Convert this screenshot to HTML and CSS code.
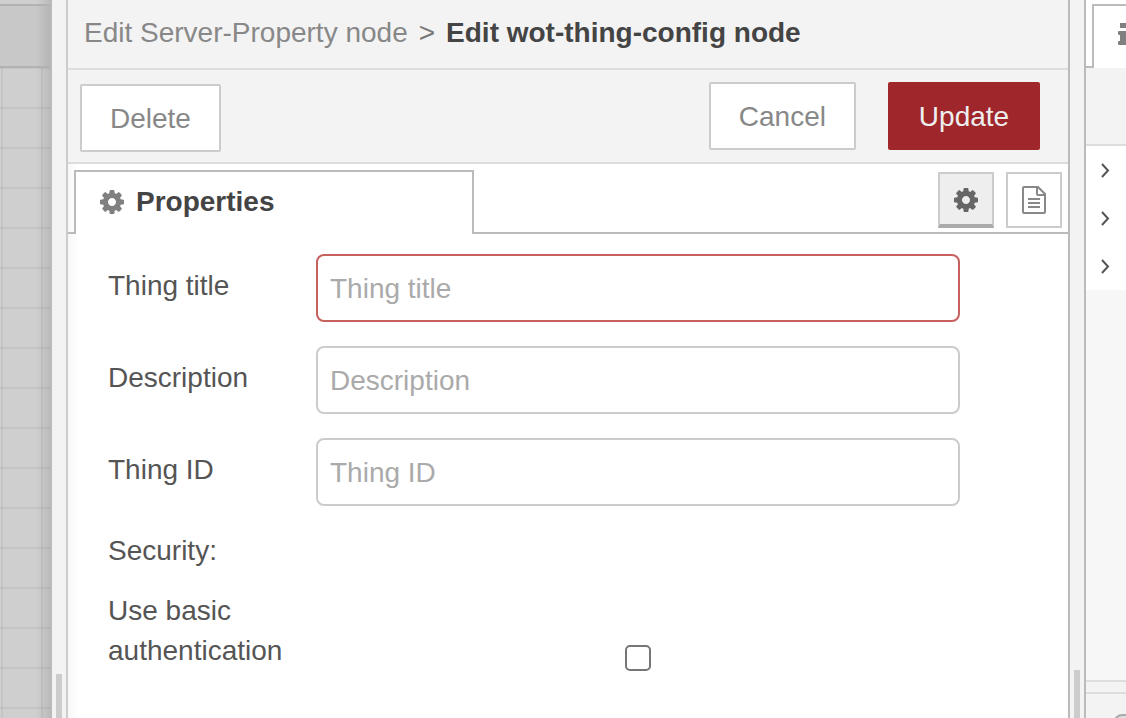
FILE: index.html
```html
<!DOCTYPE html>
<html lang="en">
<head>
<meta charset="utf-8">
<meta name="viewport" content="width=device-width, initial-scale=1">
<title>Edit wot-thing-config node</title>
<link rel="stylesheet" href="styles.css">
</head>
<body>
<svg class="symbols" aria-hidden="true">
  <symbol id="cog" viewBox="128 128 1536 1536"><path d="M1152 896q0-106-75-181t-181-75-181 75-75 181 75 181 181 75 181-75 75-181zm512-109v222q0 12-8 23t-20 13l-185 28q-19 54-39 91 35 50 107 138 10 12 10 25t-9 23q-27 37-99 108t-94 71q-12 0-26-9l-138-108q-44 23-91 38-16 136-29 186-7 28-36 28h-222q-14 0-24.500-8.500t-11.500-21.500l-28-184q-49-16-90-37l-141 107q-10 9-25 9-14 0-25-11-126-114-165-168-7-10-7-23 0-12 8-23 15-21 51-66.500t54-70.500q-27-50-41-99l-183-27q-13-2-21-12.500t-8-23.500v-222q0-12 8-23t19-13l186-28q14-46 39-92-40-57-107-138-10-12-10-24 0-10 9-23 26-36 98.500-107.500t94.500-71.500q13 0 26 10l138 107q44-23 91-38 16-136 29-186 7-28 36-28h222q14 0 24.500 8.500t11.500 21.500l28 184q49 16 90 37l142-107q9-9 24-9 13 0 25 10 129 119 165 170 7 8 7 22 0 12-8 23-15 21-51 66.500t-54 70.500q26 50 41 98l183 28q13 2 21 12.500t8 23.500z"/></symbol>
  <symbol id="chevron" viewBox="0 0 12 20"><path d="M3 4l6 6.500-6 6.500" fill="none" stroke="currentColor" stroke-width="2"/></symbol>
</svg>
<div class="editor">
  <div class="workspace">
    <div class="workspace-tabs"></div>
    <div class="workspace-grid"></div>
  </div>
  <div class="separator separator-left"><span class="handle"></span></div>
  <main class="tray">
    <nav class="tray-header">
      <a class="crumb" href="#">Edit Server-Property node</a>
      <span class="crumb-arrow">&gt;</span>
      <h1 class="crumb-current">Edit wot-thing-config node</h1>
    </nav>
    <div class="tray-toolbar">
      <button class="button button-delete" type="button">Delete</button>
      <button class="button" type="button">Cancel</button>
      <button class="button button-primary" type="button">Update</button>
    </div>
    <div class="tabs">
      <span class="tab-edge"></span>
      <button class="tab" type="button"><svg class="cog"><use href="#cog"/></svg>Properties</button>
      <div class="tab-buttons">
        <button class="icon-button selected" type="button" aria-label="Properties"><svg class="cog"><use href="#cog"/></svg></button>
        <button class="icon-button" type="button" aria-label="Description"><svg class="doc" viewBox="0 0 24 28" fill="none" stroke="currentColor" stroke-width="2"><path d="M2 1h14l7 7v18q0 1-1 1H2q-1 0-1-1V2q0-1 1-1zM15 1v7q0 1 1 1h7M6 13h12M6 17h12M6 21h12"/></svg></button>
      </div>
    </div>
    <form class="form">
      <div class="row">
        <label class="label" for="title">Thing title</label>
        <input class="input invalid" id="title" type="text" placeholder="Thing title">
      </div>
      <div class="row">
        <label class="label" for="description">Description</label>
        <input class="input" id="description" type="text" placeholder="Description">
      </div>
      <div class="row">
        <label class="label" for="thing-id">Thing ID</label>
        <input class="input" id="thing-id" type="text" placeholder="Thing ID">
      </div>
      <p class="section">Security:</p>
      <div class="row row-check">
        <label class="label" for="basic">Use basic authentication</label>
        <div class="check-cell"><input class="check" id="basic" type="checkbox"></div>
      </div>
    </form>
  </main>
  <div class="separator separator-right"><span class="handle"></span></div>
  <aside class="sidebar">
    <div class="side-tabs">
      <span class="tab-edge"></span>
      <button class="side-tab" type="button" aria-label="Information"><svg class="info" viewBox="0 0 12 22"><path d="M2 0h7v5H2zM1 8h8q1 0 1 1v9h1q1 0 1 1v2q0 1-1 1H1q-1 0-1-1v-2q0-1 1-1h1v-6H1q-1 0-1-1V9q0-1 1-1z"/></svg></button>
    </div>
    <div class="side-toolbar"></div>
    <div class="outline">
      <button class="outline-row" type="button" aria-label="Expand flows"><svg class="chevron"><use href="#chevron"/></svg></button>
      <button class="outline-row" type="button" aria-label="Expand subflows"><svg class="chevron"><use href="#chevron"/></svg></button>
      <button class="outline-row" type="button" aria-label="Expand configuration nodes"><svg class="chevron"><use href="#chevron"/></svg></button>
    </div>
    <div class="side-space"></div>
    <div class="side-split"></div>
    <div class="side-footer"><span class="footer-button"></span></div>
  </aside>
</div>
</body>
</html>
```

FILE: styles.css
```css
* { box-sizing: border-box; }
body {
  margin: 0;
  background: #f3f3f3;
  color: #555;
  font: 28px/40px "Liberation Sans", Arial, sans-serif;
}
button, input { font: inherit; margin: 0; }
button { cursor: pointer; }
.symbols { display: none; }
.editor {
  display: grid;
  grid-template-columns: 52px 16px minmax(0, 1fr) 18px 40px;
  min-height: 100vh;
  overflow: hidden;
}

.workspace {
  display: flex;
  flex-direction: column;
  padding-top: 4px;
  background: linear-gradient(to right, transparent 36px, #0000001c), #cfcfcf;
}
.workspace-tabs {
  height: 64px;
  margin-right: 2px;
  border: solid #b2b2b2;
  border-width: 2px 0;
  background: #00000008;
}
.workspace-grid {
  flex: 1;
  margin-right: 2px;
  background:
    linear-gradient(to bottom, #0000000c 2px, transparent 2px) 0 39px / 40px 40px,
    linear-gradient(to right, #0000000c 2px, transparent 2px) 1px 0 / 40px 40px;
}

.separator {
  display: flex;
  align-items: flex-end;
  padding-left: 4px;
  background: #f3f3f3;
}
.separator-left { border-right: 2px solid #ccc; }
.separator-right { border: solid #bbb; border-width: 0 2px; }
.handle { width: 6px; height: 44px; background: #ccc; }
.separator-right .handle { height: 48px; }

.tray {
  display: flex;
  flex-direction: column;
  background: linear-gradient(to right, #f7f7f7, #fff 10px);
}
.tray-header {
  display: flex;
  gap: 11px;
  padding: 13px 16px 15px;
  border-bottom: 2px solid #ddd;
  background: #f3f3f3;
  white-space: nowrap;
}
.crumb { color: #888; text-decoration: none; }
.crumb-arrow { color: #777; }
.crumb-current { margin: 0; font-size: 28px; color: #444; }
.tray-toolbar {
  display: flex;
  gap: 32px;
  padding: 12px 28px 10px 12px;
  border-bottom: 2px solid #ddd;
  background: #f3f3f3;
}
.button {
  height: 68px;
  padding: 2px 28px 0;
  border: 2px solid #ccc;
  border-radius: 2px;
  background: #fff;
  color: #888;
}
.button-delete { margin: 2px auto 0 0; }
.button-primary {
  min-width: 152px;
  border-color: #9f272b;
  background: #9f272b;
  color: #eee;
}

.tabs { display: flex; padding-top: 6px; }
.tab-edge { flex: none; width: 6px; border-bottom: 2px solid #bbb; }
.tab {
  display: flex;
  align-items: center;
  gap: 12px;
  width: 400px;
  height: 64px;
  padding: 0 24px 2px;
  border: solid #bbb;
  border-width: 2px 2px 0;
  background: #fff;
  color: #444;
  font-weight: bold;
}
.cog { width: 24px; height: 24px; fill: currentColor; }
.tab .cog { color: #808080; }
.tab-buttons {
  display: flex;
  flex: 1;
  justify-content: flex-end;
  gap: 12px;
  padding: 2px 6px 4px 0;
  border-bottom: 2px solid #bbb;
}
.icon-button {
  display: grid;
  place-items: center;
  width: 56px;
  height: 56px;
  padding: 0;
  border: 2px solid #ccc;
  background: #fff;
  color: #888;
}
.icon-button.selected {
  padding-top: 2px;
  border-bottom: 4px solid #aaa;
  background: #eee;
  color: #666;
}
.doc { width: 24px; height: 28px; }

.form { padding: 20px 108px 20px 40px; }
.row { display: flex; gap: 8px; margin-bottom: 24px; }
.label { flex: none; width: 200px; padding-top: 12px; }
.input {
  flex: 1;
  min-width: 0;
  height: 68px;
  padding: 2px 12px 0;
  border: 2px solid #ccc;
  border-radius: 8px;
  background: #fff;
  color: #555;
}
.input::placeholder { color: #aaa; opacity: 1; }
.input.invalid { border-color: #c6615f; }
.section { margin: 25px 0 20px; }
.row-check { align-items: flex-end; margin: 0; }
.row-check .label { padding: 0; }
.check-cell { display: flex; flex: 1; justify-content: center; }
.check {
  width: 26px;
  height: 26px;
  appearance: none;
  border: 2px solid #767676;
  border-radius: 5px;
  background: #fff;
}
.check:checked { background: #767676; }

.sidebar {
  display: flex;
  flex-direction: column;
  overflow: hidden;
  background: #f3f3f3;
}
.side-tabs {
  display: flex;
  height: 68px;
  padding-top: 4px;
  background: #fff;
}
.side-tab {
  flex: none;
  width: 70px;
  padding: 0 0 6px 24px;
  border: solid #bbb;
  border-width: 2px 0 0 2px;
  background: #fff;
  text-align: left;
}
.info { display: block; width: 12px; height: 22px; fill: #808080; }
.side-toolbar { height: 78px; border-bottom: 2px solid #ddd; }
.outline { background: #fff; }
.outline-row {
  display: flex;
  align-items: center;
  width: 100%;
  height: 48px;
  padding: 0 0 0 13px;
  border: 0;
  background: none;
  color: #555;
}
.chevron { width: 12px; height: 20px; }
.side-space { flex: 1; background: #f7f7f7; }
.side-split { height: 14px; border: solid #ddd; border-width: 2px 0; }
.side-footer { display: flex; height: 24px; padding: 20px 0 0 28px; }
.footer-button {
  flex: none;
  width: 40px;
  height: 40px;
  border: 2px solid #aaa;
  border-radius: 8px;
  background: #ddd;
}
```
